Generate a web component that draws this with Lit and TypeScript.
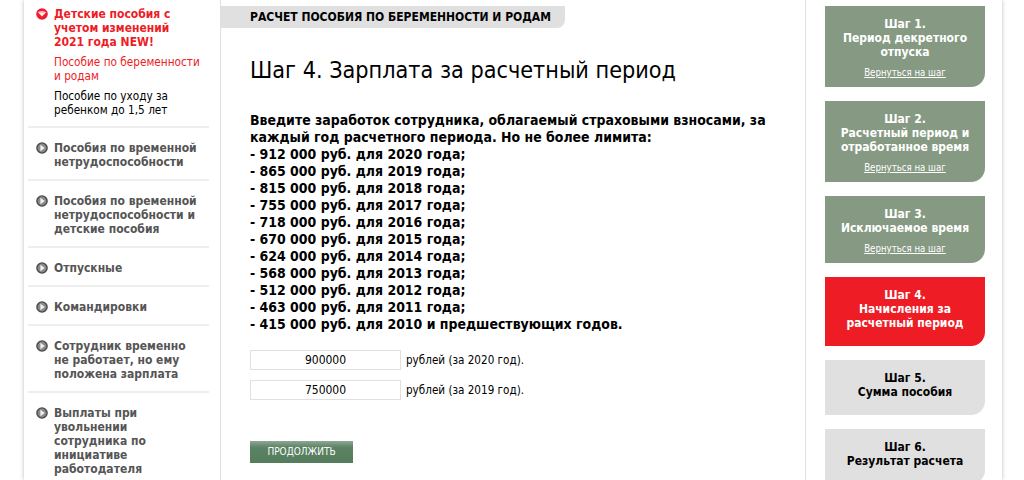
import { LitElement, html, css, svg } from "lit";
import { customElement } from "lit/decorators.js";

const limits = [
  ["912 000", "2020 года;"], ["865 000", "2019 года;"], ["815 000", "2018 года;"], ["755 000", "2017 года;"],
  ["718 000", "2016 года;"], ["670 000", "2015 года;"], ["624 000", "2014 года;"], ["568 000", "2013 года;"],
  ["512 000", "2012 года;"], ["463 000", "2011 года;"], ["415 000", "2010 и предшествующих годов."],
];
const navItems = [
  ["Пособия по временной", "нетрудоспособности"],
  ["Пособия по временной", "нетрудоспособности и", "детские пособия"],
  ["Отпускные"],
  ["Командировки"],
  ["Сотрудник временно", "не работает, но ему", "положена зарплата"],
  ["Выплаты при", "увольнении", "сотрудника по", "инициативе", "работодателя"],
];
const lines = (l: string[]) => l.map((t, i) => (i ? html`<br />${t}` : t));

const bullet = (open: boolean) => html`<svg class="bullet" width="12" height="12" viewBox="0 0 12 12">
  ${open
    ? svg`<circle cx="6" cy="6" r="5.8" fill="#ee1c2e"/><path d="M1.8 4.2 Q6 1.6 10.2 4.2 L10 5 H2Z" fill="#f9b9bf"/><path d="M2.6 5 H9.4 L6 8.6Z" fill="#fdeff0"/>`
    : svg`<circle cx="6" cy="6" r="5.8" fill="#4a4a4a"/><circle cx="6" cy="6" r="4.4" fill="#8a8a8a"/><path d="M4.4 2.8 L8.8 6 L4.4 9.2Z" fill="#f0f0f0"/>`}
</svg>`;

const FF = css`"DejaVu Sans Condensed", "DejaVu Sans", sans-serif`;

@customElement("app-root")
export class AppRoot extends LitElement {
  static styles = css`
    :host { display: block; height: 480px; overflow: hidden; background: #fff; font-family: ${FF}; color: #000; }
    .page { margin-left: 24px; width: 978px; height: 480px; display: grid; grid-template-columns: 196px 586px 196px; box-shadow: 0 0 4px #bbb; background: #fff; overflow: hidden; }
    .side { padding: 0 0 0 4px; width: 181px; }
    .top { padding: 7px 0 9px 0; border-bottom: 2px solid #eee; }
    .item { display: grid; grid-template-columns: 26px 1fr; padding: 13px 0 10px 0; border-bottom: 2px solid #eee; }
    .item.head { padding: 0; border: 0; }
    .bullet { margin: 1px 0 0 8px; }
    .label { font: bold 12px/14px ${FF}; color: #555; }
    .head .label { color: #ee1c25; }
    .sub { margin: 6px 0 0 26px; font: 11.7px/14px ${FF}; color: #000; }
    .sub.on { color: #ee1c25; }
    .main { border-left: 1px solid #e0e0e0; border-right: 1px solid #e0e0e0; padding-top: 6px; }
    .tab { width: 344px; height: 22px; box-sizing: border-box; background: #e0e0e0; border-bottom-right-radius: 8px; padding-left: 29px; font: bold 12px/23px ${FF}; color: #000; white-space: nowrap; }
    .body { padding: 0 0 0 29px; }
    h1 { margin: 26px 0 0; font: 400 23.2px/32px ${FF}; }
    .info { margin-top: 26px; font: bold 13.95px/17px ${FF}; white-space: nowrap; }
    .row { display: flex; align-items: center; gap: 5px; font-size: 11.6px; }
    .row.first { margin-top: 17px; }
    .row + .row { margin-top: 10px; }
    .field { width: 151px; height: 20px; box-sizing: border-box; border: 1px solid #e0e0e0; text-align: center; font: 12px/18px ${FF}; }
    .go { display: block; margin-top: 41px; width: 103px; height: 22px; padding: 0; border: 0; background: linear-gradient(#8fa793, #5a8263 30%, #547c5d); color: #fff; font: 10px/22px ${FF}; text-align: center; }
    .steps { padding: 6px 0 0 19px; display: flex; flex-direction: column; gap: 14px; }
    .step { width: 160px; box-sizing: border-box; padding: 11px 0 16px; border-bottom-right-radius: 14px; text-align: center; font: bold 12px/14px ${FF}; background: #e0e0e0; color: #000; }
    .step.has-back { padding-bottom: 7px; }
    .step.done { background: #869a83; color: #fff; }
    .step.cur { background: #ee1c25; color: #fff; }
    .back { display: block; margin-top: 7px; font: 400 9.6px/14px ${FF}; color: #fff; text-decoration: underline; }
  `;
  render() {
    const steps: [string, string[], string, boolean][] = [
      ["Шаг 1.", ["Период декретного", "отпуска"], "done", true],
      ["Шаг 2.", ["Расчетный период и", "отработанное время"], "done", true],
      ["Шаг 3.", ["Исключаемое время"], "done", true],
      ["Шаг 4.", ["Начисления за", "расчетный период"], "cur", false],
      ["Шаг 5.", ["Сумма пособия"], "", false],
      ["Шаг 6.", ["Результат расчета"], "", false],
    ];
    return html`<div class="page">
      <nav class="side">
        <div class="top">
          <div class="item head">${bullet(true)}<div class="label">Детские пособия с<br />учетом изменений<br />2021 года NEW!</div></div>
          <div class="sub on">Пособие по беременности<br />и родам</div>
          <div class="sub">Пособие по уходу за<br />ребенком до 1,5 лет</div>
        </div>
        ${navItems.map((n) => html`<div class="item">${bullet(false)}<div class="label">${lines(n)}</div></div>`)}
      </nav>
      <main class="main">
        <div class="tab">РАСЧЕТ ПОСОБИЯ ПО БЕРЕМЕННОСТИ И РОДАМ</div>
        <div class="body">
          <h1>Шаг 4. Зарплата за расчетный период</h1>
          <div class="info">Введите заработок сотрудника, облагаемый страховыми взносами, за<br />каждый год расчетного периода. Но не более лимита:<br />
            ${limits.map(([a, b]) => html`- ${a} руб. для ${b}<br />`)}</div>
          <div class="row first"><div class="field">900000</div><span>рублей (за 2020 год).</span></div>
          <div class="row"><div class="field">750000</div><span>рублей (за 2019 год).</span></div>
          <button class="go">ПРОДОЛЖИТЬ</button>
        </div>
      </main>
      <aside class="steps">
        ${steps.map(([a, b, c, back]) => html`<div class="step ${c} ${back ? "has-back" : ""}">${a}<br />${lines(b)}${back ? html`<a class="back">Вернуться на шаг</a>` : ""}</div>`)}
      </aside>
    </div>`;
  }
}
